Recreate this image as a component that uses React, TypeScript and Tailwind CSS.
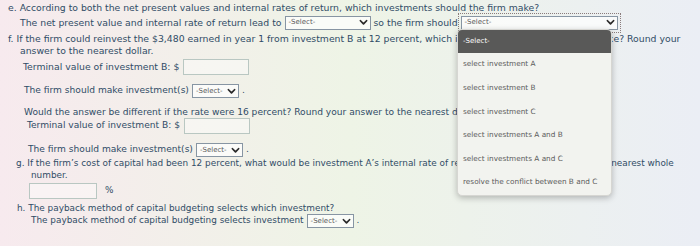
import React from 'react';

const ink = 'text-[#304c66]';

function Select({ width, focused = false }: { width: number; focused?: boolean }) {
  const box = (
    <span
      className="inline-flex h-[14px] items-center justify-between border border-[#8795a3] bg-white/70 pl-[3px] pr-[2px]"
      style={{ width }}
    >
      <span className="text-[7px] leading-none text-[#5a5a5a]">-Select-</span>
      <svg width="9" height="7" viewBox="0 0 10 8" className="shrink-0">
        <path d="M1.5 2 L5 5.6 L8.5 2" fill="none" stroke="#2b2b2b" strokeWidth="2" strokeLinecap="round" strokeLinejoin="round" />
      </svg>
    </span>
  );
  if (!focused) return box;
  return <span className="inline-flex outline-1 outline-dotted outline-[#8a7c7c] outline-offset-[2px]">{box}</span>;
}

function Field({ width }: { width: number }) {
  return <span className="inline-block h-[16px] border border-[#b9c7c2] bg-white/40" style={{ width }} />;
}

function Row({ className = '', children }: { className?: string; children: React.ReactNode }) {
  return <div className={`flex items-center whitespace-nowrap ${className}`}>{children}</div>;
}

function Line({ className = '', children }: { className?: string; children: React.ReactNode }) {
  return <div className={`h-[12px] whitespace-nowrap leading-[12px] ${className}`}>{children}</div>;
}

const options = [
  'select investment A',
  'select investment B',
  'select investment C',
  'select investments A and B',
  'select investments A and C',
  'resolve the conflict between B and C',
];

export default function App() {
  return (
    <div className="relative h-[246px] w-[700px] overflow-hidden bg-linear-to-r from-[#f7eaee] via-[#eef4e6] to-[#ebeef5]">
      <div className={`pt-[1px] font-['DejaVu_Sans',sans-serif] ${ink}`}>
        {/* e */}
        <div className="text-[9.3px]">
          <Row className="h-[13px] pl-[8px]">e. According to both the net present values and internal rates of return, which investments should the firm make?</Row>
          <Row className="mt-[1px] h-[15px] gap-[3px] pl-[20px]">
            <span>The net present value and internal rate of return lead to</span>
            <Select width={86} />
            <span>so the firm should</span>
            <Select width={157} focused />
          </Row>

          {/* f */}
          <Line className="mt-[3px] pl-[8px]">
            f. If the firm could reinvest the $3,480 earned in year 1 from investment B at 12 percent, which i
            <span className="tracking-[0.32px]">nvestment should the firm mak</span>e? Round your
          </Line>
          <Line className="pl-[20px]">answer to the nearest dollar.</Line>
          <Row className="mt-[2px] h-[16px] gap-[4px] pl-[23px]">
            <span>Terminal value of investment B: $</span>
            <Field width={66} />
          </Row>
        </div>
        <div className="text-[9.1px]">
          <Row className="mt-[9px] h-[14px] gap-[3px] pl-[24px]">
            <span>The firm should make investment(s)</span>
            <Select width={47} />
            <span>.</span>
          </Row>
          <Line className="mt-[8px] pl-[24px]">Would the answer be different if the rate were 16 percent? Round your answer to the nearest dollar.</Line>
          <Row className="h-[16px] gap-[4px] pl-[27px]">
            <span>Terminal value of investment B: $</span>
            <Field width={66} />
          </Row>
          <Row className="mt-[9px] h-[14px] gap-[3px] pl-[28px]">
            <span>The firm should make investment(s)</span>
            <Select width={47} />
            <span>.</span>
          </Row>
        </div>

        <div className="text-[8.9px]">
          {/* g */}
          <Line className="pl-[16px]">
            g. If the firm’s cost of capital had been 12 percent, what would be investment A’s internal rate of r
            <span className="tracking-[0.25px]">eturn? Round your answer to the</span> nearest whole
          </Line>
          <Line className="pl-[31px]">number.</Line>
          <Row className="mt-[2px] h-[16px] gap-[8px] pl-[29px]">
            <Field width={68} />
            <span>%</span>
          </Row>

          {/* h */}
          <Line className="mt-[3px] pl-[17px]">h. The payback method of capital budgeting selects which investment?</Line>
          <Row className="h-[14px] gap-[3px] pl-[31px]">
            <span>The payback method of capital budgeting selects investment</span>
            <Select width={47} />
            <span>.</span>
          </Row>
        </div>
      </div>

      {/* open dropdown menu */}
      <div className="absolute left-[457px] top-[29px] w-[155px] overflow-hidden rounded-[5px] border border-[#d6d6d2] bg-[#f2f3ef] font-['DejaVu_Sans',sans-serif] shadow-[0_2px_6px_rgba(0,0,0,0.25)]">
        <div className="flex h-[23px] items-center bg-[#595958] pl-[5px] text-[7px] text-white">-Select-</div>
        {options.map((o) => (
          <div key={o} className="flex h-[23.6px] items-center pl-[5px] text-[7.3px] text-[#5c5c5c]">
            {o}
          </div>
        ))}
      </div>
    </div>
  );
}
